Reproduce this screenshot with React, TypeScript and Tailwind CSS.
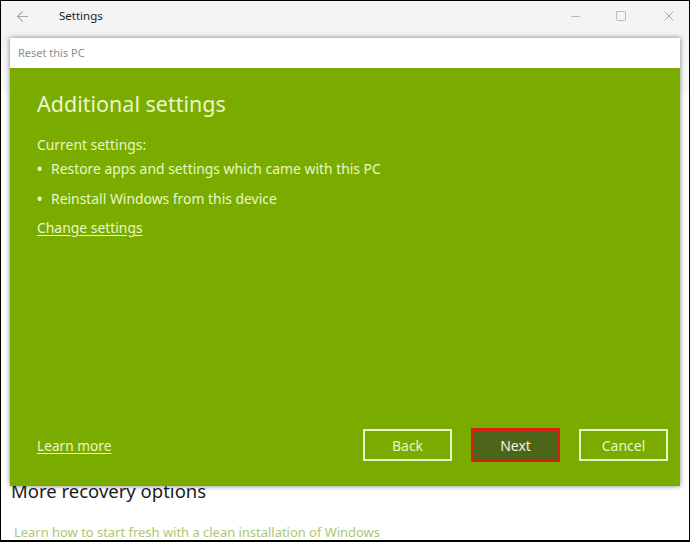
import { ArrowLeft, Minus, Square, X } from 'lucide-react'

const font = { fontFamily: '"Noto Sans", "Open Sans", sans-serif' }

function FooterButton({ label, active }: { label: string; active?: boolean }) {
    return (
        <button
            className={
                active
                    ? "w-[89px] h-[34px] border-[3px] border-[#d9200f] bg-[#4c651b] text-[#f2f7df] text-[14px] flex items-center justify-center"
                    : "w-[89px] h-[32px] border-2 border-[#e8f5c4] text-[#e8f5c4] text-[14px] flex items-center justify-center"
            }
        >
            {label}
        </button>
    )
}

export default function App() {
    return (
        <div className="relative w-[690px] h-[542px] overflow-hidden bg-white border border-black border-b-2" style={font}>
            {/* settings window behind the dialog */}
            <div className="h-[37px] pb-[7px] bg-[#f4f4f4] flex items-center text-[#1c1c1c]">
                <ArrowLeft className="w-[17px] h-[17px] ml-[13px] text-[#a8a8a8]" strokeWidth={1.5} />
                <span className="ml-[28px] text-[11.5px]">Settings</span>
                <div className="ml-auto flex items-center text-[#9a9a9a]">
                    <Minus className="w-[13px] h-[13px] mr-[33px]" strokeWidth={1.25} />
                    <Square className="w-[12px] h-[12px] mr-[34px]" strokeWidth={1.25} />
                    <X className="w-[16px] h-[16px] mr-[12px]" strokeWidth={1.25} />
                </div>
            </div>
            <div className="h-[56px] bg-gradient-to-b from-[#f4f4f4] to-[#fbfbfb]" />
            <div className="pl-[10px] pt-[384px]">
                <h2 className="text-[18.5px] leading-[26px] text-[#1c1c1c]">More recovery options</h2>
                <p className="mt-[19px] pl-[3px] text-[12.95px] leading-[18px] text-[#a9c874]">
                    Learn how to start fresh with a clean installation of Windows
                </p>
            </div>

            {/* reset dialog */}
            <div className="absolute left-[9px] top-[37px] w-[670px] h-[448px] flex flex-col shadow-[0_0_5px_rgba(0,0,0,0.5)]">
                <div className="h-[30px] bg-white flex items-center pl-[8px] text-[11px] text-[#8c8c8c]">Reset this PC</div>
                <div className="flex-1 bg-[#7aac00] pl-[27px] pr-[12px] flex flex-col text-[#eaf6c8]">
                    <h1 className="mt-[19px] text-[21.5px] leading-[34px]">Additional settings</h1>
                    <p className="mt-[14px] text-[13.9px] leading-[20px]">Current settings:</p>
                    <ul className="mt-[4px] text-[13.9px] leading-[20px] flex flex-col gap-[10px]">
                        <li className="flex">
                            <span className="w-[14px] font-bold">•</span>
                            <span>Restore apps and settings which came with this PC</span>
                        </li>
                        <li className="flex">
                            <span className="w-[14px] font-bold">•</span>
                            <span>Reinstall Windows from this device</span>
                        </li>
                    </ul>
                    <a className="mt-[9px] text-[13.9px] leading-[20px] underline underline-offset-2">Change settings</a>
                    <div className="mt-auto mb-[24px] flex items-center gap-[19px]">
                        <a className="mr-auto mt-[2px] underline underline-offset-2 text-[13.7px]">Learn more</a>
                        <FooterButton label="Back" />
                        <FooterButton label="Next" active />
                        <FooterButton label="Cancel" />
                    </div>
                </div>
            </div>
        </div>
    )
}
